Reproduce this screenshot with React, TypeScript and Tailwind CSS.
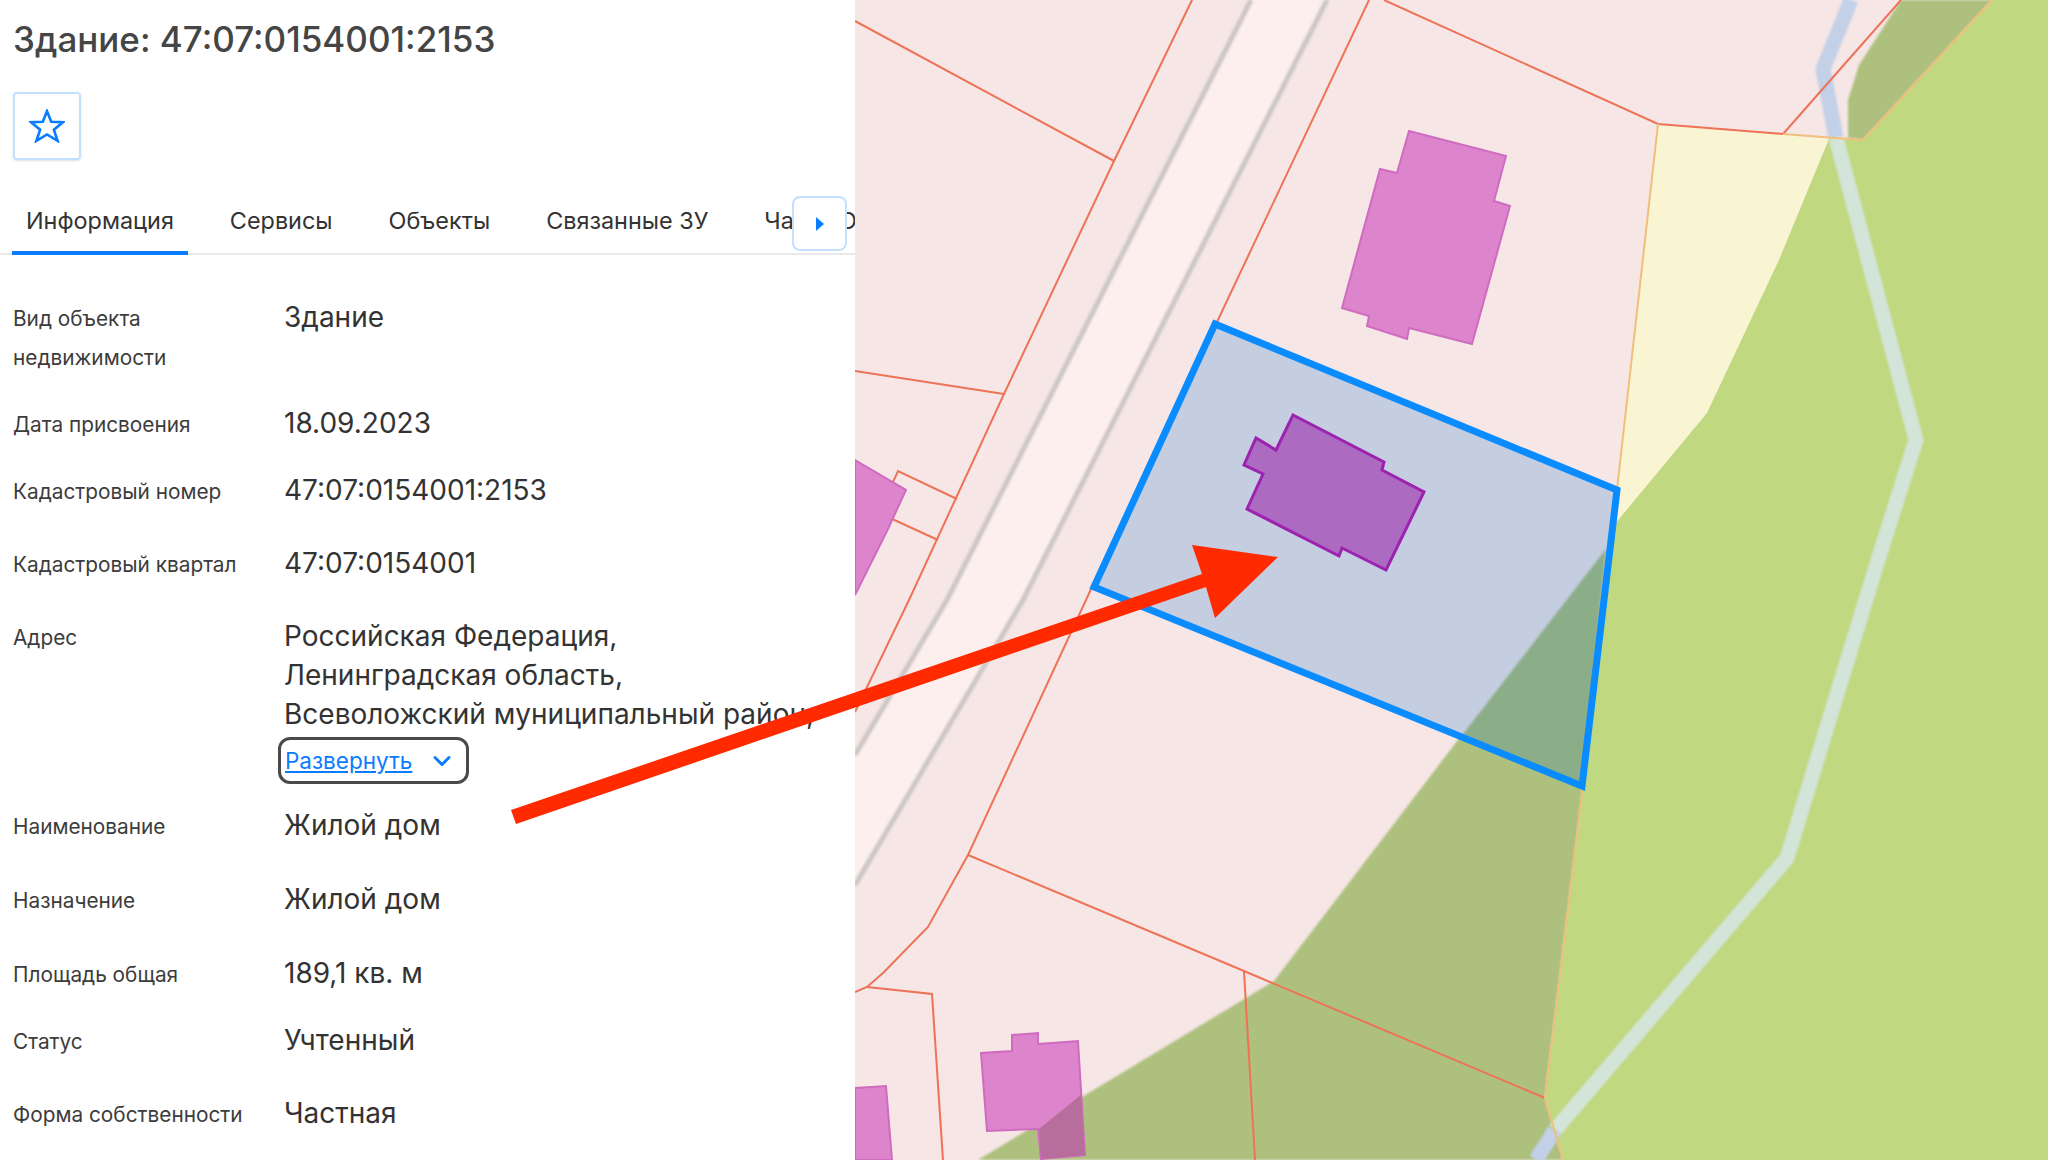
import { ChevronDown } from "lucide-react";

type Row = {
  label: string[];
  value: string[];
  gap: string;
  expand?: boolean;
};

const rows: Row[] = [
  { label: ["Вид объекта", "недвижимости"], value: ["Здание"], gap: "mb-[28px]" },
  { label: ["Дата присвоения"], value: ["18.09.2023"], gap: "mb-[28px]" },
  { label: ["Кадастровый номер"], value: ["47:07:0154001:2153"], gap: "mb-[34px]" },
  { label: ["Кадастровый квартал"], value: ["47:07:0154001"], gap: "mb-[34px]" },
  {
    label: ["Адрес"],
    value: ["Российская Федерация,", "Ленинградская область,", "Всеволожский муниципальный район,"],
    gap: "mb-[22px]",
    expand: true,
  },
  { label: ["Наименование"], value: ["Жилой дом"], gap: "mb-[35px]" },
  { label: ["Назначение"], value: ["Жилой дом"], gap: "mb-[35px]" },
  { label: ["Площадь общая"], value: ["189,1 кв. м"], gap: "mb-[28px]" },
  { label: ["Статус"], value: ["Учтенный"], gap: "mb-[34px]" },
  { label: ["Форма собственности"], value: ["Частная"], gap: "mb-0" },
];

const tabs = ["Информация", "Сервисы", "Объекты", "Связанные ЗУ", "Части ОКС"];

function MapView() {
  return (
    <svg viewBox="855 0 1193 1160" className="block h-full w-full">
      <rect x="855" y="0" width="1193" height="1160" fill="#f6e6e6" />
      {/* road */}
      <polygon points="1251,0 1327,0 1023,600 855,885 855,755 947,600" fill="#fdefed" />
      <path d="M1251 0 L947 600 L855 755" fill="none" stroke="#cdc6c6" strokeWidth="5" className="blur-[1px]" />
      <path d="M1327 0 L1023 600 L855 885" fill="none" stroke="#cdc6c6" strokeWidth="5" className="blur-[1px]" />
      {/* yellow plot */}
      <polygon points="1658,124 1829,139 1779,260 1707,413 1610,530 1616,497" fill="#f9f5d2" />
      {/* forest */}
      <polygon
        points="1606,549 1464,732 1274,981 978,1160 1563,1160 1545,1098 1583,786"
        fill="#adc07e"
        className="blur-[1px]"
      />
      <polygon points="1901,0 1992,0 1863,140 1848,138 1848,100 1859,65" fill="#adc07e" className="blur-[1px]" />
      <polygon
        points="1992,0 2048,0 2048,1160 1563,1160 1545,1098 1583,786 1610,530 1707,413 1779,260 1829,139 1863,140"
        fill="#c0d880"
      />
      {/* river */}
      <path d="M1851 0 L1823 69 L1836 138" fill="none" stroke="#c2d0e8" strokeWidth="15" className="blur-[1px]" />
      <path
        d="M1836 138 L1916 440 L1878 560 L1787 858 L1555 1130"
        fill="none"
        stroke="#d3e4d8"
        strokeWidth="15"
        className="blur-[1px]"
      />
      <path d="M1555 1130 L1536 1160" fill="none" stroke="#c2d0e8" strokeWidth="15" className="blur-[1px]" />
      {/* parcels */}
      <g fill="none" stroke="#ee7356" strokeWidth="2">
        <path d="M1192 0 L1114 161 L1004 394 L909 600 L855 712" />
        <path d="M855 21 L1114 161" />
        <path d="M855 371 L1004 394" />
        <path d="M1369 0 L1217 322" />
        <path d="M1092 587 L968 855 L928 927 L883 973 L867 987 L855 992" />
        <path d="M1384 0 L1658 124 L1783 134" />
        <path d="M1783 134 L1901 0" />
        <path d="M968 855 L1244 971 L1545 1098" />
        <path d="M1244 971 L1255 1160" />
        <path d="M867 987 L932 994 L943 1160" />
        <path d="M957 499 L898 471 L879 513 L938 540" />
      </g>
      <g fill="none" stroke="#f0bf7c" strokeWidth="2">
        <path d="M1658 124 L1617 490" />
        <path d="M1783 134 L1863 140 L1992 0" />
        <path d="M1583 786 L1545 1098 L1563 1160" />
      </g>
      {/* buildings */}
      <g fill="#dc84cc" stroke="#cf6cc0" strokeWidth="2">
        <polygon points="1409,131 1506,156 1494,201 1510,206 1472,344 1409,328 1407,339 1367,326 1369,316 1342,308 1380,169 1397,173" />
        <polygon points="855,460 906,490 888,529 855,595" />
        <polygon points="1012,1035 1038,1033 1038,1044 1078,1041 1085,1155 1041,1159 1038,1129 987,1131 981,1053 1012,1051" />
        <polygon points="855,1088 886,1086 892,1160 855,1160" />
      </g>
      <polygon points="1081,1095 1085,1155 1041,1159 1039,1129" fill="#b86e9c" />
      {/* selected parcel */}
      <polygon points="1215,324 1617,490 1582,786 1094,587" fill="#c5cde0" />
      <polygon points="1606,549 1460,738 1582,786" fill="#8bae88" className="blur-[1px]" />
      <polygon
        points="1293,415 1384,462 1382,470 1424,492 1386,570 1342,548 1339,556 1247,509 1263,474 1244,465 1256,438 1276,450"
        fill="#ac6ac0"
        stroke="#9c22b0"
        strokeWidth="3"
      />
      <polygon
        points="1215,324 1617,490 1582,786 1094,587"
        fill="none"
        stroke="#0a8cff"
        strokeWidth="7"
      />
    </svg>
  );
}

export default function App() {
  return (
    <div
      className="relative flex h-[1160px] w-[2048px] overflow-hidden bg-white"
      style={{ fontFamily: "Inter, 'Noto Sans', sans-serif" }}
    >
      <div className="w-[855px] shrink-0 overflow-hidden">
        <h1 className="mt-[17px] ml-[13px] text-[35px] leading-[44px] font-medium text-[#454545]">
          Здание: 47:07:0154001:2153
        </h1>
        <button className="mt-[31px] ml-[13px] flex h-[68px] w-[68px] items-center justify-center rounded border-2 border-[#c4e0ff] shadow-sm">
          <svg width="36" height="34" viewBox="0 0 34 32">
            <polygon
              points="17,2 21,12 32,12.5 23.5,19.5 27,30 17,24 7,30 10.5,19.5 2,12.5 13,12"
              fill="none"
              stroke="#0a7cff"
              strokeWidth="2.5"
            />
          </svg>
        </button>
        <div className="relative mt-[33px] flex h-[62px] border-b-2 border-[#e9e9e9] pl-[12px] text-[23.4px] whitespace-nowrap text-[#333]">
          {tabs.map((tab, i) => (
            <div
              key={tab}
              className={
                i === 0
                  ? "mr-[28px] h-[62px] border-b-4 border-[#0a7cff] px-[14px] pt-[10px]"
                  : "mr-[28px] h-[62px] px-[14px] pt-[10px]"
              }
            >
              {tab}
            </div>
          ))}
          <div className="absolute top-[3px] left-[792px] flex h-[55px] w-[55px] items-center justify-center rounded-lg border-2 border-[#c4e0ff] bg-white">
            <svg width="8" height="14" viewBox="0 0 8 14">
              <path d="M0 0 L8 7 L0 14 Z" fill="#0a7cff" />
            </svg>
          </div>
        </div>
        <div className="mt-[43px] flex flex-col pl-[13px]">
          {rows.map((row) => (
            <div key={row.label[0]} className={`flex ${row.gap}`}>
              <div className="mt-[1px] -mb-[1px] w-[271px] shrink-0 text-[20.8px] leading-[39px] text-[#3c3c3c]">
                {row.label.map((line) => (
                  <div key={line}>{line}</div>
                ))}
              </div>
              <div className="text-[28px] leading-[39px] whitespace-nowrap text-[#333]">
                {row.value.map((line) => (
                  <div key={line}>{line}</div>
                ))}
                {row.expand && (
                  <button className="mt-[3px] -ml-[6px] flex h-[47px] w-[191px] items-center justify-between rounded-xl border-[3px] border-[#4a4a4a] pr-[10px] pl-[4px] text-[22.5px] text-[#0a7cff]">
                    <span className="underline">Развернуть</span>
                    <ChevronDown className="size-7" strokeWidth={2.5} />
                  </button>
                )}
              </div>
            </div>
          ))}
        </div>
      </div>
      <div className="min-w-0 flex-1">
        <MapView />
      </div>
      <svg
        viewBox="0 0 2048 1160"
        className="pointer-events-none absolute inset-0 h-full w-full"
      >
        <polygon
          points="511,810 1202,574 1192,545 1278,557 1215,618 1206,587 516,824"
          fill="#ff2a00"
        />
      </svg>
    </div>
  );
}
